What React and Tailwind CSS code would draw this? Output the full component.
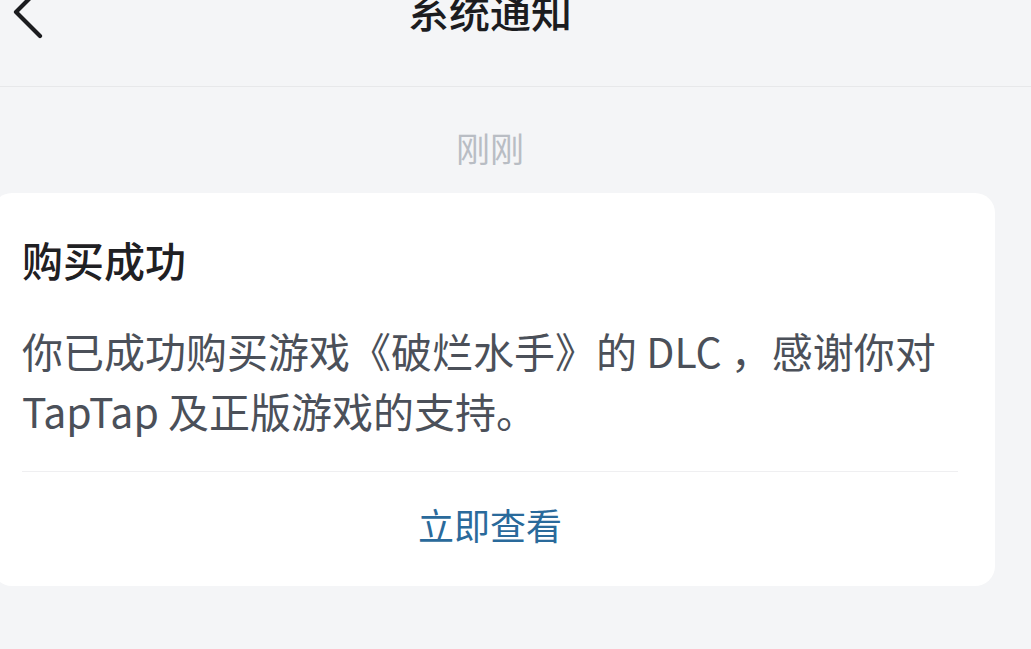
export default function App() {
  return (
    <div
      className="h-[649px] w-full overflow-hidden bg-[#f4f5f7]"
      style={{ fontFamily: '"Noto Sans CJK SC", "Noto Sans", sans-serif' }}
    >
      <header className="flex h-[87px] flex-col border-b border-[#e7e8ea]">
        <div className="relative -mt-[10px] flex h-[40px] w-[980px] items-center justify-center">
          <svg className="absolute left-[10px] top-[-12px]" width="40" height="72" viewBox="0 0 40 72" fill="none">
            <path d="M30 10 L6 34 L30 58" stroke="#1b1c1f" strokeWidth="4.2" strokeLinecap="round" strokeLinejoin="round" />
          </svg>
          <h1 className="text-[41px] leading-[40px] font-medium text-[#1b1c1f]">系统通知</h1>
        </div>
      </header>

      <div className="w-[980px] pt-[44px] pb-[28px] text-center text-[34px] leading-[34px] text-[#b9bdc4]">刚刚</div>

      <div className="-ml-[8px] w-[1003px] rounded-[20px] bg-white pt-[45px] pl-[30px] pr-[37px]">
        <h2 className="text-[41px] leading-[42px] font-medium text-[#1f2023]">购买成功</h2>
        <p className="mt-[40px] text-[41px] leading-[60px] text-[#4b5059]">
          你已成功购买游戏《破烂水手》的 DLC ，感谢你对
          <br />
          TapTap 及正版游戏的支持。
        </p>
        <div className="mt-[31px] h-px bg-[#efeff1]" />
        <div className="flex h-[114px] items-center justify-center pb-[10px]">
          <span className="text-[36px] leading-[36px] text-[#2a6a9b]">立即查看</span>
        </div>
      </div>
    </div>
  );
}
